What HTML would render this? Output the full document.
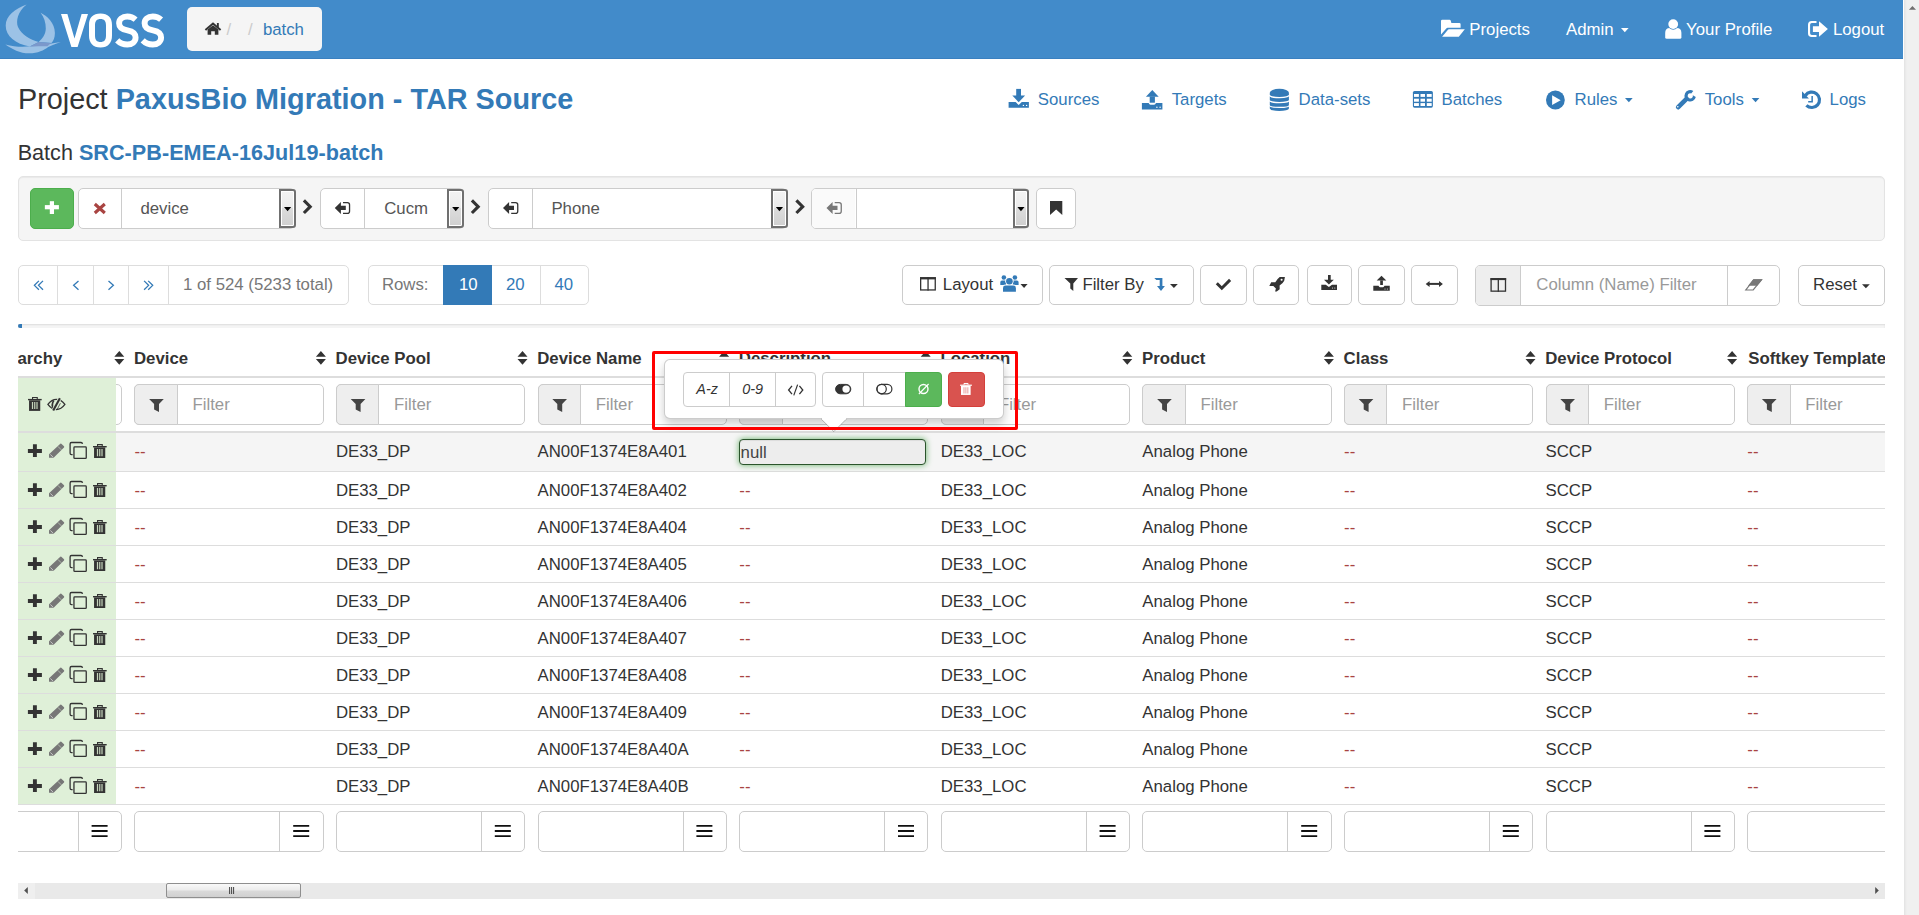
<!DOCTYPE html><html><head><meta charset="utf-8"><style>
html,body{margin:0;padding:0;width:1919px;height:915px;overflow:hidden;background:#fff;font-family:'Liberation Sans', sans-serif;}
</style></head><body>
<div style="position:absolute;left:0.00px;top:0.00px;width:1903.00px;height:59.00px;box-sizing:border-box;background:#428bca;border-bottom:1px solid #3a80c0;"></div>
<div style="position:absolute;left:187.00px;top:7.00px;width:135.00px;height:44.00px;box-sizing:border-box;background:#f5f5f5;border-radius:5px;"></div>
<div style="position:absolute;left:226.60px;top:20px;font-size:16.80px;line-height:19px;color:#ccc;white-space:nowrap;">/</div>
<div style="position:absolute;left:248.00px;top:20px;font-size:16.80px;line-height:19px;color:#ccc;white-space:nowrap;">/</div>
<div style="position:absolute;left:262.90px;top:20px;font-size:16.80px;line-height:19px;color:#337ab7;white-space:nowrap;">batch</div>
<div style="position:absolute;left:1469.30px;top:20px;font-size:16.80px;line-height:19px;color:#fff;white-space:nowrap;">Projects</div>
<div style="position:absolute;left:1566.00px;top:20px;font-size:16.80px;line-height:19px;color:#fff;white-space:nowrap;">Admin</div>
<div style="position:absolute;left:1686.10px;top:20px;font-size:16.80px;line-height:19px;color:#fff;white-space:nowrap;">Your Profile</div>
<div style="position:absolute;left:1832.90px;top:20px;font-size:16.80px;line-height:19px;color:#fff;white-space:nowrap;">Logout</div>
<div style="position:absolute;left:18.00px;top:83px;font-size:28.80px;line-height:32px;color:#333;white-space:nowrap;">Project <span style="color:#337ab7;font-weight:700;letter-spacing:0.02px">PaxusBio Migration - TAR Source</span></div>
<div style="position:absolute;left:1037.80px;top:90px;font-size:16.80px;line-height:19px;color:#337ab7;white-space:nowrap;">Sources</div>
<div style="position:absolute;left:1171.70px;top:90px;font-size:16.80px;line-height:19px;color:#337ab7;white-space:nowrap;">Targets</div>
<div style="position:absolute;left:1298.60px;top:90px;font-size:16.80px;line-height:19px;color:#337ab7;white-space:nowrap;">Data-sets</div>
<div style="position:absolute;left:1441.60px;top:90px;font-size:16.80px;line-height:19px;color:#337ab7;white-space:nowrap;">Batches</div>
<div style="position:absolute;left:1574.60px;top:90px;font-size:16.80px;line-height:19px;color:#337ab7;white-space:nowrap;">Rules</div>
<div style="position:absolute;left:1704.70px;top:90px;font-size:16.80px;line-height:19px;color:#337ab7;white-space:nowrap;">Tools</div>
<div style="position:absolute;left:1829.60px;top:90px;font-size:16.80px;line-height:19px;color:#337ab7;white-space:nowrap;">Logs</div>
<div style="position:absolute;left:17.70px;top:140px;font-size:21.60px;line-height:25px;color:#333;white-space:nowrap;">Batch <span style="color:#337ab7;font-weight:700;letter-spacing:0.04px">SRC-PB-EMEA-16Jul19-batch</span></div>
<div style="position:absolute;left:18.00px;top:176.00px;width:1867.00px;height:64.50px;box-sizing:border-box;background:#f5f5f5;border:1px solid #e3e3e3;border-radius:5px;box-shadow:inset 0 1px 1px rgba(0,0,0,.05);"></div>
<div style="position:absolute;left:30.00px;top:188.00px;width:44.00px;height:41.00px;box-sizing:border-box;background:#5cb85c;border:1px solid #4cae4c;border-radius:5px;"></div>
<div style="position:absolute;left:78.30px;top:188.00px;width:217.20px;height:41.00px;box-sizing:border-box;background:#fff;border:1px solid #ccc;border-radius:5px;"></div>
<div style="position:absolute;left:121.00px;top:188.00px;width:1.00px;height:41.00px;box-sizing:border-box;background:#ccc;"></div>
<div style="position:absolute;left:279.20px;top:189.00px;width:16.80px;height:38.80px;box-sizing:border-box;border:2px solid #707070;border-radius:0 3px 3px 0;background:linear-gradient(#f3f3f3 0%,#ebebeb 48%,#dcdcdc 50%,#d0d0d0 100%);box-shadow:inset 0 0 0 1px #fff;"></div>
<div style="position:absolute;left:140.40px;top:199px;font-size:16.80px;line-height:19px;color:#555;white-space:nowrap;">device</div>
<div style="position:absolute;left:319.50px;top:188.00px;width:144.30px;height:41.00px;box-sizing:border-box;background:#fff;border:1px solid #ccc;border-radius:5px;"></div>
<div style="position:absolute;left:364.10px;top:188.00px;width:1.00px;height:41.00px;box-sizing:border-box;background:#ccc;"></div>
<div style="position:absolute;left:447.20px;top:189.00px;width:17.10px;height:38.80px;box-sizing:border-box;border:2px solid #707070;border-radius:0 3px 3px 0;background:linear-gradient(#f3f3f3 0%,#ebebeb 48%,#dcdcdc 50%,#d0d0d0 100%);box-shadow:inset 0 0 0 1px #fff;"></div>
<div style="position:absolute;left:384.20px;top:199px;font-size:16.80px;line-height:19px;color:#555;white-space:nowrap;">Cucm</div>
<div style="position:absolute;left:487.50px;top:188.00px;width:299.90px;height:41.00px;box-sizing:border-box;background:#fff;border:1px solid #ccc;border-radius:5px;"></div>
<div style="position:absolute;left:531.70px;top:188.00px;width:1.00px;height:41.00px;box-sizing:border-box;background:#ccc;"></div>
<div style="position:absolute;left:771.00px;top:189.00px;width:16.90px;height:38.80px;box-sizing:border-box;border:2px solid #707070;border-radius:0 3px 3px 0;background:linear-gradient(#f3f3f3 0%,#ebebeb 48%,#dcdcdc 50%,#d0d0d0 100%);box-shadow:inset 0 0 0 1px #fff;"></div>
<div style="position:absolute;left:551.40px;top:199px;font-size:16.80px;line-height:19px;color:#555;white-space:nowrap;">Phone</div>
<div style="position:absolute;left:811.40px;top:188.00px;width:217.40px;height:41.00px;box-sizing:border-box;background:#fff;border:1px solid #ccc;border-radius:5px;"></div>
<div style="position:absolute;left:855.50px;top:188.00px;width:1.00px;height:41.00px;box-sizing:border-box;background:#ccc;"></div>
<div style="position:absolute;left:812.40px;top:189.00px;width:43.10px;height:39.00px;box-sizing:border-box;background:#fafafa;border-radius:4px 0 0 4px;"></div>
<div style="position:absolute;left:1012.60px;top:189.00px;width:16.70px;height:38.80px;box-sizing:border-box;border:2px solid #707070;border-radius:0 3px 3px 0;background:linear-gradient(#f3f3f3 0%,#ebebeb 48%,#dcdcdc 50%,#d0d0d0 100%);box-shadow:inset 0 0 0 1px #fff;"></div>
<div style="position:absolute;left:1035.50px;top:188.00px;width:40.80px;height:41.00px;box-sizing:border-box;background:#fff;border:1px solid #ccc;border-radius:5px;"></div>
<div style="position:absolute;left:18.20px;top:265.00px;width:330.50px;height:40.00px;box-sizing:border-box;background:#fff;border:1px solid #ddd;border-radius:5px;"></div>
<div style="position:absolute;left:56.90px;top:265.00px;width:1.00px;height:40.00px;box-sizing:border-box;background:#ddd;"></div>
<div style="position:absolute;left:93.00px;top:265.00px;width:1.00px;height:40.00px;box-sizing:border-box;background:#ddd;"></div>
<div style="position:absolute;left:128.00px;top:265.00px;width:1.00px;height:40.00px;box-sizing:border-box;background:#ddd;"></div>
<div style="position:absolute;left:168.20px;top:265.00px;width:1.00px;height:40.00px;box-sizing:border-box;background:#ddd;"></div>
<div style="position:absolute;left:183.00px;top:275px;font-size:16.80px;line-height:19px;color:#777;white-space:nowrap;">1 of 524 (5233 total)</div>
<div style="position:absolute;left:367.50px;top:265.00px;width:221.00px;height:40.00px;box-sizing:border-box;background:#fff;border:1px solid #ddd;border-radius:5px;"></div>
<div style="position:absolute;left:443.00px;top:265.00px;width:49.00px;height:40.00px;box-sizing:border-box;background:#337ab7;"></div>
<div style="position:absolute;left:539.90px;top:265.00px;width:1.00px;height:40.00px;box-sizing:border-box;background:#ddd;"></div>
<div style="position:absolute;left:381.90px;top:275px;font-size:16.80px;line-height:19px;color:#777;white-space:nowrap;">Rows:</div>
<div style="position:absolute;left:458.90px;top:275px;font-size:16.80px;line-height:19px;color:#fff;white-space:nowrap;">10</div>
<div style="position:absolute;left:505.90px;top:275px;font-size:16.80px;line-height:19px;color:#337ab7;white-space:nowrap;">20</div>
<div style="position:absolute;left:554.50px;top:275px;font-size:16.80px;line-height:19px;color:#337ab7;white-space:nowrap;">40</div>
<div style="position:absolute;left:902.00px;top:265.00px;width:140.60px;height:40.00px;box-sizing:border-box;background:#fff;border:1px solid #ccc;border-radius:5px;"></div>
<div style="position:absolute;left:942.80px;top:275px;font-size:16.80px;line-height:19px;color:#333;white-space:nowrap;">Layout</div>
<div style="position:absolute;left:1049.30px;top:265.00px;width:144.40px;height:40.00px;box-sizing:border-box;background:#fff;border:1px solid #ccc;border-radius:5px;"></div>
<div style="position:absolute;left:1082.40px;top:275px;font-size:16.80px;line-height:19px;color:#333;white-space:nowrap;">Filter By</div>
<div style="position:absolute;left:1200.40px;top:265.00px;width:46.20px;height:40.00px;box-sizing:border-box;background:#fff;border:1px solid #ccc;border-radius:5px;"></div>
<div style="position:absolute;left:1253.30px;top:265.00px;width:46.20px;height:40.00px;box-sizing:border-box;background:#fff;border:1px solid #ccc;border-radius:5px;"></div>
<div style="position:absolute;left:1306.50px;top:265.00px;width:45.00px;height:40.00px;box-sizing:border-box;background:#fff;border:1px solid #ccc;border-radius:5px;"></div>
<div style="position:absolute;left:1358.00px;top:265.00px;width:46.70px;height:40.00px;box-sizing:border-box;background:#fff;border:1px solid #ccc;border-radius:5px;"></div>
<div style="position:absolute;left:1411.40px;top:265.00px;width:46.20px;height:40.00px;box-sizing:border-box;background:#fff;border:1px solid #ccc;border-radius:5px;"></div>
<div style="position:absolute;left:1475.00px;top:265.00px;width:305.00px;height:40.50px;box-sizing:border-box;background:#fff;border:1px solid #ccc;border-radius:5px;"></div>
<div style="position:absolute;left:1476.00px;top:266.00px;width:45.00px;height:38.50px;box-sizing:border-box;background:#eee;border-radius:4px 0 0 4px;border-right:1px solid #ccc;"></div>
<div style="position:absolute;left:1727.00px;top:265.00px;width:1.00px;height:40.50px;box-sizing:border-box;background:#ccc;"></div>
<div style="position:absolute;left:1536.30px;top:275px;font-size:16.80px;line-height:19px;color:#999;white-space:nowrap;">Column (Name) Filter</div>
<div style="position:absolute;left:1798.00px;top:265.00px;width:86.60px;height:40.50px;box-sizing:border-box;background:#fff;border:1px solid #ccc;border-radius:5px;"></div>
<div style="position:absolute;left:1813.10px;top:275px;font-size:16.80px;line-height:19px;color:#333;white-space:nowrap;">Reset</div>
<div style="position:absolute;left:18.00px;top:324.00px;width:1867.00px;height:4.00px;box-sizing:border-box;background:#f5f5f5;box-shadow:inset 0 1px 2px rgba(0,0,0,.1);"></div>
<div style="position:absolute;left:18.00px;top:324.00px;width:4.00px;height:4.00px;box-sizing:border-box;background:#337ab7;border-radius:2px 0 0 2px;"></div>
<svg style="position:absolute;left:0;top:0" width="1919" height="915" viewBox="0 0 1919 915"><g fill="#9cc2e6"><path d="M26.6,4.4 C15,9 5.7,15.5 5.7,25.4 C5.7,36.5 15.5,43.5 29.8,46.6 L38.7,41.9 C30,39.5 21.5,35 18,27 C15.8,21 17.5,11.5 26.6,4.4 Z"/><path d="M40.6,12.7 C47,16 54.9,22.5 54.9,33 C54.9,37.5 53.5,41 51.4,43.1 L38.7,41.9 C42.5,38.5 45.6,34.5 45.8,28.5 C45.9,22.5 44,17 40.6,12.7 Z"/><path d="M5.4,44.4 C12,49 20,53.3 29.2,53.3 C38,53.3 44,50 48.2,46.9 C52,45 56,43.5 60.9,41.9 C52,43.2 45,44.6 38,45.5 C28,46.8 17,47.8 5.4,44.4 Z"/></g><path d="M29.8,46.4 L38.7,41.9 L51.2,43.1 L47.4,46.2 C41,46.3 35,46.3 29.8,46.4 Z" fill="#7b98cb"/><path d="M61,14 L67.4,14 L74.5,38.5 L81.6,14 L88,14 L77.6,47 L71.4,47 Z" fill="#fff"/><path d="M100.5,13.5 C93,13.5 89,17.5 89,25 L89,35.5 C89,43 93,47.5 100.5,47.5 C108,47.5 112,43 112,35.5 L112,25 C112,17.5 108,13.5 100.5,13.5 Z M100.5,19 C104.2,19 106,21 106,25.5 L106,35.5 C106,40 104.2,42 100.5,42 C96.8,42 95,40 95,35.5 L95,25.5 C95,21 96.8,19 100.5,19 Z" fill="#fff" fill-rule="evenodd"/><path d="M135.60,19.6 C133.00,17.3 130.30,16.5 127.30,16.5 C122.00,16.5 119.10,19.5 119.10,23.2 C119.10,27.5 122.50,29.5 127.50,30.4 C132.50,31.3 135.60,33.5 135.60,37.6 C135.60,41.8 132.00,44.5 127.30,44.5 C123.00,44.5 119.80,43 117.20,40.4" fill="none" stroke="#fff" stroke-width="5.9"/><path d="M161.10,19.6 C158.50,17.3 155.80,16.5 152.80,16.5 C147.50,16.5 144.60,19.5 144.60,23.2 C144.60,27.5 148.00,29.5 153.00,30.4 C158.00,31.3 161.10,33.5 161.10,37.6 C161.10,41.8 157.50,44.5 152.80,44.5 C148.50,44.5 145.30,43 142.70,40.4" fill="none" stroke="#fff" stroke-width="5.9"/><path d="M205.4,30 L213,23.6 L220.6,30" fill="none" stroke="#333" stroke-width="2"/><path d="M207.6,29.6 L213,25.2 L218.4,29.6 L218.4,34.8 L214.8,34.8 L214.8,31.2 L211.2,31.2 L211.2,34.8 L207.6,34.8 Z" fill="#333"/><rect x="216.9" y="23" width="1.9" height="4.4" fill="#333"/><path d="M1441,21 Q1441,19.7 1442.3,19.7 H1449.6 Q1450.4,19.7 1450.7,20.5 L1451.4,22.9 H1459.3 Q1460.6,22.9 1460.6,24.2 V27.8 H1447.6 Q1446.8,27.8 1446.3,28.4 L1441,34.4 Z" fill="#fff"/><path d="M1442.1,36.8 L1448.2,29.6 Q1448.6,29.2 1449.2,29.2 H1464.8 L1458.8,36.8 Z" fill="#fff"/><path d="M1621,28 H1628.6 L1624.8,32.2 Z" fill="#fff"/><path d="M1665.2,32.8 Q1665.2,28.1 1669.9,28.1 H1676.7 Q1681.4,28.1 1681.4,32.8 V37.3 Q1681.4,38.8 1679.9,38.8 H1666.7 Q1665.2,38.8 1665.2,37.3 Z" fill="#fff"/><circle cx="1673.2" cy="24.1" r="5.6" fill="#428bca"/><circle cx="1673.2" cy="24.1" r="4.9" fill="#fff"/><path d="M1816.5,22.05 H1811.8 Q1809.05,22.05 1809.05,24.8 V33.2 Q1809.05,35.95 1811.8,35.95 H1816.5" fill="none" stroke="#fff" stroke-width="2.1"/><path d="M1812.9,26.2 H1819 V21.3 L1827.9,29 L1819,36.8 V32 H1812.9 Z" fill="#fff"/><rect x="1016.2" y="88.9" width="4.8" height="7.2" fill="#337ab7"/><path d="M1012.3,95.6 H1025.1 L1018.7,102.2 Z" fill="#337ab7"/><path d="M1008.6,102 H1015.6 L1018.7,105 L1021.8,102 H1028.9 V107.7 H1008.6 Z" fill="#337ab7"/><circle cx="1023.4" cy="105.4" r="0.7" fill="#fff"/><circle cx="1026.6" cy="105.4" r="0.7" fill="#fff"/><path d="M1152.3,90 L1158.7,96.7 H1145.9 Z" fill="#337ab7"/><rect x="1149.7" y="96.5" width="5.2" height="6.2" fill="#337ab7"/><path d="M1141.9,103.1 H1148.6 Q1149.3,104.8 1150.5,104.8 H1154.1 Q1155.3,104.8 1156,103.1 H1162.4 V109.6 H1141.9 Z" fill="#337ab7"/><circle cx="1156.9" cy="107.3" r="0.7" fill="#fff"/><circle cx="1160.1" cy="107.3" r="0.7" fill="#fff"/><path d="M1269.8,92.8 A9.55,4 0 0 1 1288.9,92.8 V108.6 A9.55,2.5 0 0 1 1269.8,108.6 Z" fill="#337ab7"/><path d="M1269.3,95.1 A10,2.5 0 0 0 1289.4,95.1 M1269.3,100.2 A10,2.3 0 0 0 1289.4,100.2 M1269.3,105.2 A10,2.2 0 0 0 1289.4,105.2" fill="none" stroke="#fff" stroke-width="1.25"/><rect x="1412.9" y="90.9" width="20" height="16.8" rx="1.6" fill="#337ab7"/><rect x="1414.0" y="94.0" width="4.9" height="2.9" fill="#fff"/><rect x="1414.0" y="98.7" width="4.9" height="3.0" fill="#fff"/><rect x="1414.0" y="103.1" width="4.9" height="2.9" fill="#fff"/><rect x="1420.5" y="94.0" width="4.5" height="2.9" fill="#fff"/><rect x="1420.5" y="98.7" width="4.5" height="3.0" fill="#fff"/><rect x="1420.5" y="103.1" width="4.5" height="2.9" fill="#fff"/><rect x="1426.8" y="94.0" width="4.9" height="2.9" fill="#fff"/><rect x="1426.8" y="98.7" width="4.9" height="3.0" fill="#fff"/><rect x="1426.8" y="103.1" width="4.9" height="2.9" fill="#fff"/><circle cx="1555.4" cy="100" r="9.4" fill="#337ab7"/><path d="M1552.1,95.3 V105.1 L1560.7,100.2 Z" fill="#fff"/><path d="M1625,98 H1632.7 L1628.85,102.2 Z" fill="#337ab7"/><path d="M1678.2,107.2 L1686.5,98.9" stroke="#337ab7" stroke-width="4.6" stroke-linecap="round"/><path d="M1693.3,91 A5.7,5.7 0 1 0 1695.8,97 L1692.8,95.2 A2.6,2.6 0 1 1 1691.2,93.4 Z" fill="#337ab7"/><circle cx="1677.8" cy="106.8" r="0.8" fill="#fff"/><path d="M1751.7,98 H1759.4 L1755.55,102.2 Z" fill="#337ab7"/><path d="M1805.4,95.5 A7.7,7.7 0 1 1 1806.4,105.3" fill="none" stroke="#337ab7" stroke-width="3.2"/><path d="M1802,91.2 V98.4 H1808.9 Z" fill="#337ab7"/><path d="M1812.15,96.1 V101.8 H1808.2" fill="none" stroke="#337ab7" stroke-width="1.5"/><rect x="49.8" y="201.2" width="4.2" height="12.8" fill="#fff"/><rect x="44.85" y="205.1" width="14.05" height="4.2" fill="#fff"/><path d="M284.00,206.9 H291.20 L287.60,211.2 Z" fill="#000"/><path d="M94.8,204 L104.8,213 M104.8,204 L94.8,213" stroke="#a94442" stroke-width="3.1"/><path d="M303.90,200.4 L310.20,206.7 L303.90,213" fill="none" stroke="#333" stroke-width="3.1" stroke-linecap="butt" stroke-linejoin="miter"/><path d="M452.15,206.9 H459.35 L455.75,211.2 Z" fill="#000"/><path d="M334.80,207.9 L340.90,202 V205.7 H345.80 V210.1 H340.90 V214 Z" fill="#333"/><path d="M343.00,202.65 H347.40 Q349.55,202.65 349.55,204.8 V211.2 Q349.55,213.35 347.40,213.35 H343.00" fill="none" stroke="#333" stroke-width="1.3"/><path d="M471.90,200.4 L478.20,206.7 L471.90,213" fill="none" stroke="#333" stroke-width="3.1" stroke-linecap="butt" stroke-linejoin="miter"/><path d="M775.85,206.9 H783.05 L779.45,211.2 Z" fill="#000"/><path d="M503.00,207.9 L509.10,202 V205.7 H514.00 V210.1 H509.10 V214 Z" fill="#333"/><path d="M511.20,202.65 H515.60 Q517.75,202.65 517.75,204.8 V211.2 Q517.75,213.35 515.60,213.35 H511.20" fill="none" stroke="#333" stroke-width="1.3"/><path d="M796.40,200.4 L802.70,206.7 L796.40,213" fill="none" stroke="#333" stroke-width="3.1" stroke-linecap="butt" stroke-linejoin="miter"/><path d="M1017.35,206.9 H1024.55 L1020.95,211.2 Z" fill="#000"/><path d="M826.50,207.9 L832.60,202 V205.7 H837.50 V210.1 H832.60 V214 Z" fill="#777"/><path d="M834.70,202.65 H839.10 Q841.25,202.65 841.25,204.8 V211.2 Q841.25,213.35 839.10,213.35 H834.70" fill="none" stroke="#777" stroke-width="1.3"/><path d="M1050,201 H1062.3 V215 L1056.15,209.6 L1050,215 Z" fill="#333"/><path d="M38.9,280.9 L34.4,285.35 L38.9,289.8 M43,280.9 L38.5,285.35 L43,289.8" fill="none" stroke="#337ab7" stroke-width="1.3"/><path d="M78.5,280.9 L73.6,285.35 L78.5,289.8" fill="none" stroke="#337ab7" stroke-width="1.3"/><path d="M108.5,280.9 L113.4,285.35 L108.5,289.8" fill="none" stroke="#337ab7" stroke-width="1.3"/><path d="M144.1,280.9 L148.6,285.35 L144.1,289.8 M148.2,280.9 L152.7,285.35 L148.2,289.8" fill="none" stroke="#337ab7" stroke-width="1.3"/><rect x="920.65" y="277.85" width="14.6" height="12.1" fill="none" stroke="#333" stroke-width="1.3"/><rect x="920" y="277.2" width="15.9" height="2.2" fill="#333"/><rect x="927.4" y="277.2" width="1.3" height="13.4" fill="#333"/><circle cx="1003.9" cy="277.5" r="2.3" fill="#337ab7"/><circle cx="1014.9" cy="277.5" r="2.3" fill="#337ab7"/><path d="M1000.3,284.9 V282.3 Q1000.3,280.6 1002,280.6 H1006 V284.9 Z M1012.8,280.6 H1016.9 Q1018.6,280.6 1018.6,282.3 V284.9 H1012.8 Z" fill="#337ab7"/><circle cx="1009.4" cy="281.3" r="4.2" fill="#fff"/><path d="M1003,291.8 V287.8 Q1003,285.3 1005.5,285.3 H1013.4 Q1015.9,285.3 1015.9,287.8 V291.8 Z" fill="none" stroke="#fff" stroke-width="1.6"/><circle cx="1009.4" cy="281.2" r="3.3" fill="#337ab7"/><path d="M1003,291.8 V288 Q1003,285.6 1005.5,285.6 H1013.4 Q1015.9,285.6 1015.9,288 V291.8 Z" fill="#337ab7"/><path d="M1020.5,284 H1027.6 L1024.05,288.1 Z" fill="#333"/><path d="M1064.5,278.1 H1078 L1073.3,283.5 V291 L1070.3,288.5 V283.5 Z" fill="#333"/><path d="M1154.3,278 H1162.4 V286.1 H1164.9 L1161,291 L1157,286.1 H1159.7 V280 H1156.3 Z" fill="#337ab7"/><path d="M1170,284 H1177.8 L1173.9,288 Z" fill="#333"/><path d="M1216.8,283.3 L1221.8,288.2 L1230.1,279.9" fill="none" stroke="#333" stroke-width="3"/><path d="M1279.7,277.1 H1284.9 L1284.2,280.7 Q1283,283.3 1279.6,285.6 L1279.7,289.3 L1276.7,291.5 H1275.1 L1275.9,288.4 L1273.3,286 H1269.3 L1271.2,282.2 H1275.3 Q1277.3,279 1279.7,277.1 Z" fill="#333"/><circle cx="1281.6" cy="279.7" r="1.05" fill="#fff"/><rect x="1328" y="275" width="2.7" height="5" fill="#333"/><path d="M1324,279.7 H1333.8 L1328.9,284.6 Z" fill="#333"/><path d="M1321.3,284.8 H1325.8 L1328.9,287 L1332,284.8 H1337 V289.9 H1321.3 Z" fill="#333"/><circle cx="1332.5" cy="288" r="0.5" fill="#fff"/><circle cx="1334.8" cy="288" r="0.5" fill="#fff"/><path d="M1381.5,275.8 L1386.3,280.6 H1376.7 Z" fill="#333"/><rect x="1380.2" y="280.4" width="2.7" height="4.6" fill="#333"/><path d="M1373.3,285.8 H1378.5 Q1379,287.2 1380,287.2 H1383 Q1384,287.2 1384.5,285.8 H1389.75 V290.7 H1373.3 Z" fill="#333"/><circle cx="1385" cy="289" r="0.5" fill="#fff"/><circle cx="1387.3" cy="289" r="0.5" fill="#fff"/><path d="M1428,283.9 H1440.6" stroke="#333" stroke-width="2"/><path d="M1425.7,283.9 L1429.6,280.9 V286.9 Z M1442.9,283.9 L1439,280.9 V286.9 Z" fill="#333"/><rect x="1491.1" y="278.75" width="14.4" height="12.4" fill="none" stroke="#333" stroke-width="1.3"/><rect x="1490.45" y="278.1" width="15.7" height="2" fill="#333"/><rect x="1497.65" y="278.1" width="1.3" height="13.7" fill="#333"/><path d="M1753.7,279.8 H1761.4 L1753.2,290 H1745.8 Z" fill="none" stroke="#777" stroke-width="1.2"/><path d="M1753.3,279.2 H1762.6 L1757.3,285.8 H1748.1 Z" fill="#777"/><path d="M1862,284.2 H1869.8 L1865.9,288.2 Z" fill="#333"/></svg>
<div style="position:absolute;left:18px;top:330px;width:1867px;height:540px;overflow:hidden;">
<div style="position:absolute;left:-18px;top:-330px;width:1919px;height:915px;">
<div style="position:absolute;left:17.50px;top:349px;font-size:16.80px;line-height:19px;color:#333;white-space:nowrap;font-weight:700;">archy</div>
<div style="position:absolute;left:134.00px;top:349px;font-size:16.80px;line-height:19px;color:#333;white-space:nowrap;font-weight:700;">Device</div>
<div style="position:absolute;left:335.60px;top:349px;font-size:16.80px;line-height:19px;color:#333;white-space:nowrap;font-weight:700;">Device Pool</div>
<div style="position:absolute;left:537.20px;top:349px;font-size:16.80px;line-height:19px;color:#333;white-space:nowrap;font-weight:700;">Device Name</div>
<div style="position:absolute;left:738.80px;top:349px;font-size:16.80px;line-height:19px;color:#333;white-space:nowrap;font-weight:700;">Description</div>
<div style="position:absolute;left:940.40px;top:349px;font-size:16.80px;line-height:19px;color:#333;white-space:nowrap;font-weight:700;">Location</div>
<div style="position:absolute;left:1142.00px;top:349px;font-size:16.80px;line-height:19px;color:#333;white-space:nowrap;font-weight:700;">Product</div>
<div style="position:absolute;left:1343.60px;top:349px;font-size:16.80px;line-height:19px;color:#333;white-space:nowrap;font-weight:700;">Class</div>
<div style="position:absolute;left:1545.20px;top:349px;font-size:16.80px;line-height:19px;color:#333;white-space:nowrap;font-weight:700;">Device Protocol</div>
<div style="position:absolute;left:1748.30px;top:349px;font-size:16.80px;line-height:19px;color:#333;white-space:nowrap;font-weight:700;">Softkey Template</div>
<div style="position:absolute;left:0.00px;top:376.00px;width:1919.00px;height:2.00px;box-sizing:border-box;background:#ddd;"></div>
<div style="position:absolute;left:-67.30px;top:384.00px;width:189.30px;height:41.00px;box-sizing:border-box;background:#fff;border:1px solid #ccc;border-radius:5px;"></div>
<div style="position:absolute;left:-67.30px;top:384.00px;width:43.60px;height:41.00px;box-sizing:border-box;background:#eee;border:1px solid #ccc;border-radius:5px 0 0 5px;"></div>
<div style="position:absolute;left:-9.10px;top:395px;font-size:16.80px;line-height:19px;color:#999;white-space:nowrap;">Filter</div>
<div style="position:absolute;left:134.30px;top:384.00px;width:189.30px;height:41.00px;box-sizing:border-box;background:#fff;border:1px solid #ccc;border-radius:5px;"></div>
<div style="position:absolute;left:134.30px;top:384.00px;width:43.60px;height:41.00px;box-sizing:border-box;background:#eee;border:1px solid #ccc;border-radius:5px 0 0 5px;"></div>
<div style="position:absolute;left:192.50px;top:395px;font-size:16.80px;line-height:19px;color:#999;white-space:nowrap;">Filter</div>
<div style="position:absolute;left:335.90px;top:384.00px;width:189.30px;height:41.00px;box-sizing:border-box;background:#fff;border:1px solid #ccc;border-radius:5px;"></div>
<div style="position:absolute;left:335.90px;top:384.00px;width:43.60px;height:41.00px;box-sizing:border-box;background:#eee;border:1px solid #ccc;border-radius:5px 0 0 5px;"></div>
<div style="position:absolute;left:394.10px;top:395px;font-size:16.80px;line-height:19px;color:#999;white-space:nowrap;">Filter</div>
<div style="position:absolute;left:537.50px;top:384.00px;width:189.30px;height:41.00px;box-sizing:border-box;background:#fff;border:1px solid #ccc;border-radius:5px;"></div>
<div style="position:absolute;left:537.50px;top:384.00px;width:43.60px;height:41.00px;box-sizing:border-box;background:#eee;border:1px solid #ccc;border-radius:5px 0 0 5px;"></div>
<div style="position:absolute;left:595.70px;top:395px;font-size:16.80px;line-height:19px;color:#999;white-space:nowrap;">Filter</div>
<div style="position:absolute;left:739.10px;top:384.00px;width:189.30px;height:41.00px;box-sizing:border-box;background:#fff;border:1px solid #ccc;border-radius:5px;"></div>
<div style="position:absolute;left:739.10px;top:384.00px;width:43.60px;height:41.00px;box-sizing:border-box;background:#eee;border:1px solid #ccc;border-radius:5px 0 0 5px;"></div>
<div style="position:absolute;left:797.30px;top:395px;font-size:16.80px;line-height:19px;color:#999;white-space:nowrap;">Filter</div>
<div style="position:absolute;left:940.70px;top:384.00px;width:189.30px;height:41.00px;box-sizing:border-box;background:#fff;border:1px solid #ccc;border-radius:5px;"></div>
<div style="position:absolute;left:940.70px;top:384.00px;width:43.60px;height:41.00px;box-sizing:border-box;background:#eee;border:1px solid #ccc;border-radius:5px 0 0 5px;"></div>
<div style="position:absolute;left:998.90px;top:395px;font-size:16.80px;line-height:19px;color:#999;white-space:nowrap;">Filter</div>
<div style="position:absolute;left:1142.30px;top:384.00px;width:189.30px;height:41.00px;box-sizing:border-box;background:#fff;border:1px solid #ccc;border-radius:5px;"></div>
<div style="position:absolute;left:1142.30px;top:384.00px;width:43.60px;height:41.00px;box-sizing:border-box;background:#eee;border:1px solid #ccc;border-radius:5px 0 0 5px;"></div>
<div style="position:absolute;left:1200.50px;top:395px;font-size:16.80px;line-height:19px;color:#999;white-space:nowrap;">Filter</div>
<div style="position:absolute;left:1343.90px;top:384.00px;width:189.30px;height:41.00px;box-sizing:border-box;background:#fff;border:1px solid #ccc;border-radius:5px;"></div>
<div style="position:absolute;left:1343.90px;top:384.00px;width:43.60px;height:41.00px;box-sizing:border-box;background:#eee;border:1px solid #ccc;border-radius:5px 0 0 5px;"></div>
<div style="position:absolute;left:1402.10px;top:395px;font-size:16.80px;line-height:19px;color:#999;white-space:nowrap;">Filter</div>
<div style="position:absolute;left:1545.50px;top:384.00px;width:189.30px;height:41.00px;box-sizing:border-box;background:#fff;border:1px solid #ccc;border-radius:5px;"></div>
<div style="position:absolute;left:1545.50px;top:384.00px;width:43.60px;height:41.00px;box-sizing:border-box;background:#eee;border:1px solid #ccc;border-radius:5px 0 0 5px;"></div>
<div style="position:absolute;left:1603.70px;top:395px;font-size:16.80px;line-height:19px;color:#999;white-space:nowrap;">Filter</div>
<div style="position:absolute;left:1747.10px;top:384.00px;width:189.30px;height:41.00px;box-sizing:border-box;background:#fff;border:1px solid #ccc;border-radius:5px;"></div>
<div style="position:absolute;left:1747.10px;top:384.00px;width:43.60px;height:41.00px;box-sizing:border-box;background:#eee;border:1px solid #ccc;border-radius:5px 0 0 5px;"></div>
<div style="position:absolute;left:1805.30px;top:395px;font-size:16.80px;line-height:19px;color:#999;white-space:nowrap;">Filter</div>
<div style="position:absolute;left:0.00px;top:431.00px;width:1919.00px;height:2.00px;box-sizing:border-box;background:#ddd;"></div>
<div style="position:absolute;left:0.00px;top:433.00px;width:1919.00px;height:38.00px;box-sizing:border-box;background:#f5f5f5;"></div>
<div style="position:absolute;left:0.00px;top:471.00px;width:1919.00px;height:1.00px;box-sizing:border-box;background:#ddd;"></div>
<div style="position:absolute;left:0.00px;top:508.00px;width:1919.00px;height:1.00px;box-sizing:border-box;background:#ddd;"></div>
<div style="position:absolute;left:0.00px;top:545.00px;width:1919.00px;height:1.00px;box-sizing:border-box;background:#ddd;"></div>
<div style="position:absolute;left:0.00px;top:582.00px;width:1919.00px;height:1.00px;box-sizing:border-box;background:#ddd;"></div>
<div style="position:absolute;left:0.00px;top:619.00px;width:1919.00px;height:1.00px;box-sizing:border-box;background:#ddd;"></div>
<div style="position:absolute;left:0.00px;top:656.00px;width:1919.00px;height:1.00px;box-sizing:border-box;background:#ddd;"></div>
<div style="position:absolute;left:0.00px;top:693.00px;width:1919.00px;height:1.00px;box-sizing:border-box;background:#ddd;"></div>
<div style="position:absolute;left:0.00px;top:730.00px;width:1919.00px;height:1.00px;box-sizing:border-box;background:#ddd;"></div>
<div style="position:absolute;left:0.00px;top:767.00px;width:1919.00px;height:1.00px;box-sizing:border-box;background:#ddd;"></div>
<div style="position:absolute;left:0.00px;top:804.00px;width:1919.00px;height:1.00px;box-sizing:border-box;background:#ddd;"></div>
<div style="position:absolute;left:134.50px;top:442px;font-size:16.80px;line-height:19px;color:#a94442;white-space:nowrap;">--</div>
<div style="position:absolute;left:335.90px;top:442px;font-size:16.80px;line-height:19px;color:#333;white-space:nowrap;">DE33_DP</div>
<div style="position:absolute;left:537.50px;top:442px;font-size:16.80px;line-height:19px;color:#333;white-space:nowrap;">AN00F1374E8A401</div>
<div style="position:absolute;left:940.70px;top:442px;font-size:16.80px;line-height:19px;color:#333;white-space:nowrap;">DE33_LOC</div>
<div style="position:absolute;left:1142.30px;top:442px;font-size:16.80px;line-height:19px;color:#333;white-space:nowrap;">Analog Phone</div>
<div style="position:absolute;left:1344.10px;top:442px;font-size:16.80px;line-height:19px;color:#a94442;white-space:nowrap;">--</div>
<div style="position:absolute;left:1545.50px;top:442px;font-size:16.80px;line-height:19px;color:#333;white-space:nowrap;">SCCP</div>
<div style="position:absolute;left:1747.30px;top:442px;font-size:16.80px;line-height:19px;color:#a94442;white-space:nowrap;">--</div>
<div style="position:absolute;left:134.50px;top:481px;font-size:16.80px;line-height:19px;color:#a94442;white-space:nowrap;">--</div>
<div style="position:absolute;left:335.90px;top:481px;font-size:16.80px;line-height:19px;color:#333;white-space:nowrap;">DE33_DP</div>
<div style="position:absolute;left:537.50px;top:481px;font-size:16.80px;line-height:19px;color:#333;white-space:nowrap;">AN00F1374E8A402</div>
<div style="position:absolute;left:739.30px;top:481px;font-size:16.80px;line-height:19px;color:#a94442;white-space:nowrap;">--</div>
<div style="position:absolute;left:940.70px;top:481px;font-size:16.80px;line-height:19px;color:#333;white-space:nowrap;">DE33_LOC</div>
<div style="position:absolute;left:1142.30px;top:481px;font-size:16.80px;line-height:19px;color:#333;white-space:nowrap;">Analog Phone</div>
<div style="position:absolute;left:1344.10px;top:481px;font-size:16.80px;line-height:19px;color:#a94442;white-space:nowrap;">--</div>
<div style="position:absolute;left:1545.50px;top:481px;font-size:16.80px;line-height:19px;color:#333;white-space:nowrap;">SCCP</div>
<div style="position:absolute;left:1747.30px;top:481px;font-size:16.80px;line-height:19px;color:#a94442;white-space:nowrap;">--</div>
<div style="position:absolute;left:134.50px;top:518px;font-size:16.80px;line-height:19px;color:#a94442;white-space:nowrap;">--</div>
<div style="position:absolute;left:335.90px;top:518px;font-size:16.80px;line-height:19px;color:#333;white-space:nowrap;">DE33_DP</div>
<div style="position:absolute;left:537.50px;top:518px;font-size:16.80px;line-height:19px;color:#333;white-space:nowrap;">AN00F1374E8A404</div>
<div style="position:absolute;left:739.30px;top:518px;font-size:16.80px;line-height:19px;color:#a94442;white-space:nowrap;">--</div>
<div style="position:absolute;left:940.70px;top:518px;font-size:16.80px;line-height:19px;color:#333;white-space:nowrap;">DE33_LOC</div>
<div style="position:absolute;left:1142.30px;top:518px;font-size:16.80px;line-height:19px;color:#333;white-space:nowrap;">Analog Phone</div>
<div style="position:absolute;left:1344.10px;top:518px;font-size:16.80px;line-height:19px;color:#a94442;white-space:nowrap;">--</div>
<div style="position:absolute;left:1545.50px;top:518px;font-size:16.80px;line-height:19px;color:#333;white-space:nowrap;">SCCP</div>
<div style="position:absolute;left:1747.30px;top:518px;font-size:16.80px;line-height:19px;color:#a94442;white-space:nowrap;">--</div>
<div style="position:absolute;left:134.50px;top:555px;font-size:16.80px;line-height:19px;color:#a94442;white-space:nowrap;">--</div>
<div style="position:absolute;left:335.90px;top:555px;font-size:16.80px;line-height:19px;color:#333;white-space:nowrap;">DE33_DP</div>
<div style="position:absolute;left:537.50px;top:555px;font-size:16.80px;line-height:19px;color:#333;white-space:nowrap;">AN00F1374E8A405</div>
<div style="position:absolute;left:739.30px;top:555px;font-size:16.80px;line-height:19px;color:#a94442;white-space:nowrap;">--</div>
<div style="position:absolute;left:940.70px;top:555px;font-size:16.80px;line-height:19px;color:#333;white-space:nowrap;">DE33_LOC</div>
<div style="position:absolute;left:1142.30px;top:555px;font-size:16.80px;line-height:19px;color:#333;white-space:nowrap;">Analog Phone</div>
<div style="position:absolute;left:1344.10px;top:555px;font-size:16.80px;line-height:19px;color:#a94442;white-space:nowrap;">--</div>
<div style="position:absolute;left:1545.50px;top:555px;font-size:16.80px;line-height:19px;color:#333;white-space:nowrap;">SCCP</div>
<div style="position:absolute;left:1747.30px;top:555px;font-size:16.80px;line-height:19px;color:#a94442;white-space:nowrap;">--</div>
<div style="position:absolute;left:134.50px;top:592px;font-size:16.80px;line-height:19px;color:#a94442;white-space:nowrap;">--</div>
<div style="position:absolute;left:335.90px;top:592px;font-size:16.80px;line-height:19px;color:#333;white-space:nowrap;">DE33_DP</div>
<div style="position:absolute;left:537.50px;top:592px;font-size:16.80px;line-height:19px;color:#333;white-space:nowrap;">AN00F1374E8A406</div>
<div style="position:absolute;left:739.30px;top:592px;font-size:16.80px;line-height:19px;color:#a94442;white-space:nowrap;">--</div>
<div style="position:absolute;left:940.70px;top:592px;font-size:16.80px;line-height:19px;color:#333;white-space:nowrap;">DE33_LOC</div>
<div style="position:absolute;left:1142.30px;top:592px;font-size:16.80px;line-height:19px;color:#333;white-space:nowrap;">Analog Phone</div>
<div style="position:absolute;left:1344.10px;top:592px;font-size:16.80px;line-height:19px;color:#a94442;white-space:nowrap;">--</div>
<div style="position:absolute;left:1545.50px;top:592px;font-size:16.80px;line-height:19px;color:#333;white-space:nowrap;">SCCP</div>
<div style="position:absolute;left:1747.30px;top:592px;font-size:16.80px;line-height:19px;color:#a94442;white-space:nowrap;">--</div>
<div style="position:absolute;left:134.50px;top:629px;font-size:16.80px;line-height:19px;color:#a94442;white-space:nowrap;">--</div>
<div style="position:absolute;left:335.90px;top:629px;font-size:16.80px;line-height:19px;color:#333;white-space:nowrap;">DE33_DP</div>
<div style="position:absolute;left:537.50px;top:629px;font-size:16.80px;line-height:19px;color:#333;white-space:nowrap;">AN00F1374E8A407</div>
<div style="position:absolute;left:739.30px;top:629px;font-size:16.80px;line-height:19px;color:#a94442;white-space:nowrap;">--</div>
<div style="position:absolute;left:940.70px;top:629px;font-size:16.80px;line-height:19px;color:#333;white-space:nowrap;">DE33_LOC</div>
<div style="position:absolute;left:1142.30px;top:629px;font-size:16.80px;line-height:19px;color:#333;white-space:nowrap;">Analog Phone</div>
<div style="position:absolute;left:1344.10px;top:629px;font-size:16.80px;line-height:19px;color:#a94442;white-space:nowrap;">--</div>
<div style="position:absolute;left:1545.50px;top:629px;font-size:16.80px;line-height:19px;color:#333;white-space:nowrap;">SCCP</div>
<div style="position:absolute;left:1747.30px;top:629px;font-size:16.80px;line-height:19px;color:#a94442;white-space:nowrap;">--</div>
<div style="position:absolute;left:134.50px;top:666px;font-size:16.80px;line-height:19px;color:#a94442;white-space:nowrap;">--</div>
<div style="position:absolute;left:335.90px;top:666px;font-size:16.80px;line-height:19px;color:#333;white-space:nowrap;">DE33_DP</div>
<div style="position:absolute;left:537.50px;top:666px;font-size:16.80px;line-height:19px;color:#333;white-space:nowrap;">AN00F1374E8A408</div>
<div style="position:absolute;left:739.30px;top:666px;font-size:16.80px;line-height:19px;color:#a94442;white-space:nowrap;">--</div>
<div style="position:absolute;left:940.70px;top:666px;font-size:16.80px;line-height:19px;color:#333;white-space:nowrap;">DE33_LOC</div>
<div style="position:absolute;left:1142.30px;top:666px;font-size:16.80px;line-height:19px;color:#333;white-space:nowrap;">Analog Phone</div>
<div style="position:absolute;left:1344.10px;top:666px;font-size:16.80px;line-height:19px;color:#a94442;white-space:nowrap;">--</div>
<div style="position:absolute;left:1545.50px;top:666px;font-size:16.80px;line-height:19px;color:#333;white-space:nowrap;">SCCP</div>
<div style="position:absolute;left:1747.30px;top:666px;font-size:16.80px;line-height:19px;color:#a94442;white-space:nowrap;">--</div>
<div style="position:absolute;left:134.50px;top:703px;font-size:16.80px;line-height:19px;color:#a94442;white-space:nowrap;">--</div>
<div style="position:absolute;left:335.90px;top:703px;font-size:16.80px;line-height:19px;color:#333;white-space:nowrap;">DE33_DP</div>
<div style="position:absolute;left:537.50px;top:703px;font-size:16.80px;line-height:19px;color:#333;white-space:nowrap;">AN00F1374E8A409</div>
<div style="position:absolute;left:739.30px;top:703px;font-size:16.80px;line-height:19px;color:#a94442;white-space:nowrap;">--</div>
<div style="position:absolute;left:940.70px;top:703px;font-size:16.80px;line-height:19px;color:#333;white-space:nowrap;">DE33_LOC</div>
<div style="position:absolute;left:1142.30px;top:703px;font-size:16.80px;line-height:19px;color:#333;white-space:nowrap;">Analog Phone</div>
<div style="position:absolute;left:1344.10px;top:703px;font-size:16.80px;line-height:19px;color:#a94442;white-space:nowrap;">--</div>
<div style="position:absolute;left:1545.50px;top:703px;font-size:16.80px;line-height:19px;color:#333;white-space:nowrap;">SCCP</div>
<div style="position:absolute;left:1747.30px;top:703px;font-size:16.80px;line-height:19px;color:#a94442;white-space:nowrap;">--</div>
<div style="position:absolute;left:134.50px;top:740px;font-size:16.80px;line-height:19px;color:#a94442;white-space:nowrap;">--</div>
<div style="position:absolute;left:335.90px;top:740px;font-size:16.80px;line-height:19px;color:#333;white-space:nowrap;">DE33_DP</div>
<div style="position:absolute;left:537.50px;top:740px;font-size:16.80px;line-height:19px;color:#333;white-space:nowrap;">AN00F1374E8A40A</div>
<div style="position:absolute;left:739.30px;top:740px;font-size:16.80px;line-height:19px;color:#a94442;white-space:nowrap;">--</div>
<div style="position:absolute;left:940.70px;top:740px;font-size:16.80px;line-height:19px;color:#333;white-space:nowrap;">DE33_LOC</div>
<div style="position:absolute;left:1142.30px;top:740px;font-size:16.80px;line-height:19px;color:#333;white-space:nowrap;">Analog Phone</div>
<div style="position:absolute;left:1344.10px;top:740px;font-size:16.80px;line-height:19px;color:#a94442;white-space:nowrap;">--</div>
<div style="position:absolute;left:1545.50px;top:740px;font-size:16.80px;line-height:19px;color:#333;white-space:nowrap;">SCCP</div>
<div style="position:absolute;left:1747.30px;top:740px;font-size:16.80px;line-height:19px;color:#a94442;white-space:nowrap;">--</div>
<div style="position:absolute;left:134.50px;top:777px;font-size:16.80px;line-height:19px;color:#a94442;white-space:nowrap;">--</div>
<div style="position:absolute;left:335.90px;top:777px;font-size:16.80px;line-height:19px;color:#333;white-space:nowrap;">DE33_DP</div>
<div style="position:absolute;left:537.50px;top:777px;font-size:16.80px;line-height:19px;color:#333;white-space:nowrap;">AN00F1374E8A40B</div>
<div style="position:absolute;left:739.30px;top:777px;font-size:16.80px;line-height:19px;color:#a94442;white-space:nowrap;">--</div>
<div style="position:absolute;left:940.70px;top:777px;font-size:16.80px;line-height:19px;color:#333;white-space:nowrap;">DE33_LOC</div>
<div style="position:absolute;left:1142.30px;top:777px;font-size:16.80px;line-height:19px;color:#333;white-space:nowrap;">Analog Phone</div>
<div style="position:absolute;left:1344.10px;top:777px;font-size:16.80px;line-height:19px;color:#a94442;white-space:nowrap;">--</div>
<div style="position:absolute;left:1545.50px;top:777px;font-size:16.80px;line-height:19px;color:#333;white-space:nowrap;">SCCP</div>
<div style="position:absolute;left:1747.30px;top:777px;font-size:16.80px;line-height:19px;color:#a94442;white-space:nowrap;">--</div>
<div style="position:absolute;left:739.00px;top:439.00px;width:187.00px;height:26.00px;box-sizing:border-box;background:#ededed;border:1px solid #2b542c;border-radius:4px;box-shadow:inset 0 1px 1px rgba(0,0,0,.075),0 0 6px #67b168;"></div>
<div style="position:absolute;left:740.60px;top:443px;font-size:16.80px;line-height:19px;color:#444;white-space:nowrap;">null</div>
<div style="position:absolute;left:18.00px;top:378.00px;width:98.00px;height:53.00px;box-sizing:border-box;background:#dff0d8;"></div>
<div style="position:absolute;left:18.00px;top:433.00px;width:98.00px;height:38.00px;box-sizing:border-box;background:#dff0d8;"></div>
<div style="position:absolute;left:18.00px;top:472.00px;width:98.00px;height:36.00px;box-sizing:border-box;background:#dff0d8;"></div>
<div style="position:absolute;left:18.00px;top:509.00px;width:98.00px;height:36.00px;box-sizing:border-box;background:#dff0d8;"></div>
<div style="position:absolute;left:18.00px;top:546.00px;width:98.00px;height:36.00px;box-sizing:border-box;background:#dff0d8;"></div>
<div style="position:absolute;left:18.00px;top:583.00px;width:98.00px;height:36.00px;box-sizing:border-box;background:#dff0d8;"></div>
<div style="position:absolute;left:18.00px;top:620.00px;width:98.00px;height:36.00px;box-sizing:border-box;background:#dff0d8;"></div>
<div style="position:absolute;left:18.00px;top:657.00px;width:98.00px;height:36.00px;box-sizing:border-box;background:#dff0d8;"></div>
<div style="position:absolute;left:18.00px;top:694.00px;width:98.00px;height:36.00px;box-sizing:border-box;background:#dff0d8;"></div>
<div style="position:absolute;left:18.00px;top:731.00px;width:98.00px;height:36.00px;box-sizing:border-box;background:#dff0d8;"></div>
<div style="position:absolute;left:18.00px;top:768.00px;width:98.00px;height:36.00px;box-sizing:border-box;background:#dff0d8;"></div>
<div style="position:absolute;left:-67.30px;top:811.00px;width:189.30px;height:41.00px;box-sizing:border-box;background:#fff;border:1px solid #ccc;border-radius:5px;"></div>
<div style="position:absolute;left:77.70px;top:811.00px;width:1.00px;height:41.00px;box-sizing:border-box;background:#ccc;"></div>
<div style="position:absolute;left:134.30px;top:811.00px;width:189.30px;height:41.00px;box-sizing:border-box;background:#fff;border:1px solid #ccc;border-radius:5px;"></div>
<div style="position:absolute;left:279.30px;top:811.00px;width:1.00px;height:41.00px;box-sizing:border-box;background:#ccc;"></div>
<div style="position:absolute;left:335.90px;top:811.00px;width:189.30px;height:41.00px;box-sizing:border-box;background:#fff;border:1px solid #ccc;border-radius:5px;"></div>
<div style="position:absolute;left:480.90px;top:811.00px;width:1.00px;height:41.00px;box-sizing:border-box;background:#ccc;"></div>
<div style="position:absolute;left:537.50px;top:811.00px;width:189.30px;height:41.00px;box-sizing:border-box;background:#fff;border:1px solid #ccc;border-radius:5px;"></div>
<div style="position:absolute;left:682.50px;top:811.00px;width:1.00px;height:41.00px;box-sizing:border-box;background:#ccc;"></div>
<div style="position:absolute;left:739.10px;top:811.00px;width:189.30px;height:41.00px;box-sizing:border-box;background:#fff;border:1px solid #ccc;border-radius:5px;"></div>
<div style="position:absolute;left:884.10px;top:811.00px;width:1.00px;height:41.00px;box-sizing:border-box;background:#ccc;"></div>
<div style="position:absolute;left:940.70px;top:811.00px;width:189.30px;height:41.00px;box-sizing:border-box;background:#fff;border:1px solid #ccc;border-radius:5px;"></div>
<div style="position:absolute;left:1085.70px;top:811.00px;width:1.00px;height:41.00px;box-sizing:border-box;background:#ccc;"></div>
<div style="position:absolute;left:1142.30px;top:811.00px;width:189.30px;height:41.00px;box-sizing:border-box;background:#fff;border:1px solid #ccc;border-radius:5px;"></div>
<div style="position:absolute;left:1287.30px;top:811.00px;width:1.00px;height:41.00px;box-sizing:border-box;background:#ccc;"></div>
<div style="position:absolute;left:1343.90px;top:811.00px;width:189.30px;height:41.00px;box-sizing:border-box;background:#fff;border:1px solid #ccc;border-radius:5px;"></div>
<div style="position:absolute;left:1488.90px;top:811.00px;width:1.00px;height:41.00px;box-sizing:border-box;background:#ccc;"></div>
<div style="position:absolute;left:1545.50px;top:811.00px;width:189.30px;height:41.00px;box-sizing:border-box;background:#fff;border:1px solid #ccc;border-radius:5px;"></div>
<div style="position:absolute;left:1690.50px;top:811.00px;width:1.00px;height:41.00px;box-sizing:border-box;background:#ccc;"></div>
<div style="position:absolute;left:1747.10px;top:811.00px;width:189.30px;height:41.00px;box-sizing:border-box;background:#fff;border:1px solid #ccc;border-radius:5px;"></div>
<div style="position:absolute;left:1892.10px;top:811.00px;width:1.00px;height:41.00px;box-sizing:border-box;background:#ccc;"></div>
<svg style="position:absolute;left:0;top:0" width="1919" height="915" viewBox="0 0 1919 915"><path d="M114.30,356.8 L119.30,350.9 L124.30,356.8 Z M114.30,359 L119.30,364.8 L124.30,359 Z" fill="#333"/><path d="M315.90,356.8 L320.90,350.9 L325.90,356.8 Z M315.90,359 L320.90,364.8 L325.90,359 Z" fill="#333"/><path d="M517.50,356.8 L522.50,350.9 L527.50,356.8 Z M517.50,359 L522.50,364.8 L527.50,359 Z" fill="#333"/><path d="M719.10,356.8 L724.10,350.9 L729.10,356.8 Z M719.10,359 L724.10,364.8 L729.10,359 Z" fill="#333"/><path d="M920.70,356.8 L925.70,350.9 L930.70,356.8 Z M920.70,359 L925.70,364.8 L930.70,359 Z" fill="#333"/><path d="M1122.30,356.8 L1127.30,350.9 L1132.30,356.8 Z M1122.30,359 L1127.30,364.8 L1132.30,359 Z" fill="#333"/><path d="M1323.90,356.8 L1328.90,350.9 L1333.90,356.8 Z M1323.90,359 L1328.90,364.8 L1333.90,359 Z" fill="#333"/><path d="M1525.50,356.8 L1530.50,350.9 L1535.50,356.8 Z M1525.50,359 L1530.50,364.8 L1535.50,359 Z" fill="#333"/><path d="M1727.10,356.8 L1732.10,350.9 L1737.10,356.8 Z M1727.10,359 L1732.10,364.8 L1737.10,359 Z" fill="#333"/><path d="M1928.70,356.8 L1933.70,350.9 L1938.70,356.8 Z M1928.70,359 L1933.70,364.8 L1938.70,359 Z" fill="#333"/><path d="M-52.50,399 H-37.80 L-42.60,404 V412 L-47.50,409.4 V404 Z" fill="#444"/><path d="M149.10,399 H163.80 L159.00,404 V412 L154.10,409.4 V404 Z" fill="#444"/><path d="M350.70,399 H365.40 L360.60,404 V412 L355.70,409.4 V404 Z" fill="#444"/><path d="M552.30,399 H567.00 L562.20,404 V412 L557.30,409.4 V404 Z" fill="#444"/><path d="M753.90,399 H768.60 L763.80,404 V412 L758.90,409.4 V404 Z" fill="#444"/><path d="M955.50,399 H970.20 L965.40,404 V412 L960.50,409.4 V404 Z" fill="#444"/><path d="M1157.10,399 H1171.80 L1167.00,404 V412 L1162.10,409.4 V404 Z" fill="#444"/><path d="M1358.70,399 H1373.40 L1368.60,404 V412 L1363.70,409.4 V404 Z" fill="#444"/><path d="M1560.30,399 H1575.00 L1570.20,404 V412 L1565.30,409.4 V404 Z" fill="#444"/><path d="M1761.90,399 H1776.60 L1771.80,404 V412 L1766.90,409.4 V404 Z" fill="#444"/><path d="M28.00,398.90 H41.70 V400.30 H28.00 Z" fill="#333"/><path d="M32.55,399.00 V397.55 H37.25 V399.00" fill="none" stroke="#333" stroke-width="1.1"/><path d="M29.05,400.30 H40.25 V410.90 H29.05 Z" fill="#333"/><path d="M32.50,402.00 V409.10 M34.75,402.00 V409.10 M37.00,402.00 V409.10" stroke="#c5d5bc" stroke-width="1.20"/><path d="M47.9,404.4 C51,400.2 54.5,399.4 56.4,399.4 C58.3,399.4 61.8,400.2 64.9,404.4 C61.8,408.6 58.3,409.5 56.4,409.5 C54.5,409.5 51,408.6 47.9,404.4 Z" fill="none" stroke="#333" stroke-width="1.3"/><path d="M53.8,400.6 Q51,404.6 53.5,409" fill="none" stroke="#333" stroke-width="1.7"/><path d="M59.9,398.2 L53.2,410.6" stroke="#dff0d8" stroke-width="3.6"/><path d="M59.9,398.2 L53.2,410.6" stroke="#333" stroke-width="2.1"/><path d="M60.4,403.2 L57,409.7" stroke="#333" stroke-width="0.9" opacity="0.8"/><path d="M27.90,451.00 H41.90 M34.90,444.20 V457.00" stroke="#333" stroke-width="3.9"/><path d="M49,457.80 L49,454.20 L60.3,443.80 Q61,443.30 61.6,443.90 L64,446.30 Q64.5,447.00 64,447.60 L53.6,457.80 Z" fill="#777"/><path d="M57.9,446.40 L61.3,449.80" stroke="#dff0d8" stroke-width="0.8" opacity="0.7"/><path d="M50.3,454.40 L53.1,457.20" stroke="#fff" stroke-width="1" opacity="0.6"/><path d="M72.6,454.60 H71.5 Q70.1,454.60 70.1,453.20 V443.90 Q70.1,442.50 71.5,442.50 H81 Q82.3,442.50 82.5,443.80" fill="none" stroke="#333" stroke-width="1.3"/><rect x="73.95" y="446.95" width="12.3" height="11.5" rx="0.8" fill="none" stroke="#333" stroke-width="1.3"/><path d="M93.00,446.00 H106.70 V447.40 H93.00 Z" fill="#333"/><path d="M97.55,446.10 V444.65 H102.25 V446.10" fill="none" stroke="#333" stroke-width="1.1"/><path d="M94.05,447.40 H105.25 V458.00 H94.05 Z" fill="#333"/><path d="M97.50,449.10 V456.20 M99.75,449.10 V456.20 M102.00,449.10 V456.20" stroke="#c5d5bc" stroke-width="1.20"/><path d="M27.90,490.00 H41.90 M34.90,483.20 V496.00" stroke="#333" stroke-width="3.9"/><path d="M49,496.80 L49,493.20 L60.3,482.80 Q61,482.30 61.6,482.90 L64,485.30 Q64.5,486.00 64,486.60 L53.6,496.80 Z" fill="#777"/><path d="M57.9,485.40 L61.3,488.80" stroke="#dff0d8" stroke-width="0.8" opacity="0.7"/><path d="M50.3,493.40 L53.1,496.20" stroke="#fff" stroke-width="1" opacity="0.6"/><path d="M72.6,493.60 H71.5 Q70.1,493.60 70.1,492.20 V482.90 Q70.1,481.50 71.5,481.50 H81 Q82.3,481.50 82.5,482.80" fill="none" stroke="#333" stroke-width="1.3"/><rect x="73.95" y="485.95" width="12.3" height="11.5" rx="0.8" fill="none" stroke="#333" stroke-width="1.3"/><path d="M93.00,485.00 H106.70 V486.40 H93.00 Z" fill="#333"/><path d="M97.55,485.10 V483.65 H102.25 V485.10" fill="none" stroke="#333" stroke-width="1.1"/><path d="M94.05,486.40 H105.25 V497.00 H94.05 Z" fill="#333"/><path d="M97.50,488.10 V495.20 M99.75,488.10 V495.20 M102.00,488.10 V495.20" stroke="#c5d5bc" stroke-width="1.20"/><path d="M27.90,527.00 H41.90 M34.90,520.20 V533.00" stroke="#333" stroke-width="3.9"/><path d="M49,533.80 L49,530.20 L60.3,519.80 Q61,519.30 61.6,519.90 L64,522.30 Q64.5,523.00 64,523.60 L53.6,533.80 Z" fill="#777"/><path d="M57.9,522.40 L61.3,525.80" stroke="#dff0d8" stroke-width="0.8" opacity="0.7"/><path d="M50.3,530.40 L53.1,533.20" stroke="#fff" stroke-width="1" opacity="0.6"/><path d="M72.6,530.60 H71.5 Q70.1,530.60 70.1,529.20 V519.90 Q70.1,518.50 71.5,518.50 H81 Q82.3,518.50 82.5,519.80" fill="none" stroke="#333" stroke-width="1.3"/><rect x="73.95" y="522.95" width="12.3" height="11.5" rx="0.8" fill="none" stroke="#333" stroke-width="1.3"/><path d="M93.00,522.00 H106.70 V523.40 H93.00 Z" fill="#333"/><path d="M97.55,522.10 V520.65 H102.25 V522.10" fill="none" stroke="#333" stroke-width="1.1"/><path d="M94.05,523.40 H105.25 V534.00 H94.05 Z" fill="#333"/><path d="M97.50,525.10 V532.20 M99.75,525.10 V532.20 M102.00,525.10 V532.20" stroke="#c5d5bc" stroke-width="1.20"/><path d="M27.90,564.00 H41.90 M34.90,557.20 V570.00" stroke="#333" stroke-width="3.9"/><path d="M49,570.80 L49,567.20 L60.3,556.80 Q61,556.30 61.6,556.90 L64,559.30 Q64.5,560.00 64,560.60 L53.6,570.80 Z" fill="#777"/><path d="M57.9,559.40 L61.3,562.80" stroke="#dff0d8" stroke-width="0.8" opacity="0.7"/><path d="M50.3,567.40 L53.1,570.20" stroke="#fff" stroke-width="1" opacity="0.6"/><path d="M72.6,567.60 H71.5 Q70.1,567.60 70.1,566.20 V556.90 Q70.1,555.50 71.5,555.50 H81 Q82.3,555.50 82.5,556.80" fill="none" stroke="#333" stroke-width="1.3"/><rect x="73.95" y="559.95" width="12.3" height="11.5" rx="0.8" fill="none" stroke="#333" stroke-width="1.3"/><path d="M93.00,559.00 H106.70 V560.40 H93.00 Z" fill="#333"/><path d="M97.55,559.10 V557.65 H102.25 V559.10" fill="none" stroke="#333" stroke-width="1.1"/><path d="M94.05,560.40 H105.25 V571.00 H94.05 Z" fill="#333"/><path d="M97.50,562.10 V569.20 M99.75,562.10 V569.20 M102.00,562.10 V569.20" stroke="#c5d5bc" stroke-width="1.20"/><path d="M27.90,601.00 H41.90 M34.90,594.20 V607.00" stroke="#333" stroke-width="3.9"/><path d="M49,607.80 L49,604.20 L60.3,593.80 Q61,593.30 61.6,593.90 L64,596.30 Q64.5,597.00 64,597.60 L53.6,607.80 Z" fill="#777"/><path d="M57.9,596.40 L61.3,599.80" stroke="#dff0d8" stroke-width="0.8" opacity="0.7"/><path d="M50.3,604.40 L53.1,607.20" stroke="#fff" stroke-width="1" opacity="0.6"/><path d="M72.6,604.60 H71.5 Q70.1,604.60 70.1,603.20 V593.90 Q70.1,592.50 71.5,592.50 H81 Q82.3,592.50 82.5,593.80" fill="none" stroke="#333" stroke-width="1.3"/><rect x="73.95" y="596.95" width="12.3" height="11.5" rx="0.8" fill="none" stroke="#333" stroke-width="1.3"/><path d="M93.00,596.00 H106.70 V597.40 H93.00 Z" fill="#333"/><path d="M97.55,596.10 V594.65 H102.25 V596.10" fill="none" stroke="#333" stroke-width="1.1"/><path d="M94.05,597.40 H105.25 V608.00 H94.05 Z" fill="#333"/><path d="M97.50,599.10 V606.20 M99.75,599.10 V606.20 M102.00,599.10 V606.20" stroke="#c5d5bc" stroke-width="1.20"/><path d="M27.90,638.00 H41.90 M34.90,631.20 V644.00" stroke="#333" stroke-width="3.9"/><path d="M49,644.80 L49,641.20 L60.3,630.80 Q61,630.30 61.6,630.90 L64,633.30 Q64.5,634.00 64,634.60 L53.6,644.80 Z" fill="#777"/><path d="M57.9,633.40 L61.3,636.80" stroke="#dff0d8" stroke-width="0.8" opacity="0.7"/><path d="M50.3,641.40 L53.1,644.20" stroke="#fff" stroke-width="1" opacity="0.6"/><path d="M72.6,641.60 H71.5 Q70.1,641.60 70.1,640.20 V630.90 Q70.1,629.50 71.5,629.50 H81 Q82.3,629.50 82.5,630.80" fill="none" stroke="#333" stroke-width="1.3"/><rect x="73.95" y="633.95" width="12.3" height="11.5" rx="0.8" fill="none" stroke="#333" stroke-width="1.3"/><path d="M93.00,633.00 H106.70 V634.40 H93.00 Z" fill="#333"/><path d="M97.55,633.10 V631.65 H102.25 V633.10" fill="none" stroke="#333" stroke-width="1.1"/><path d="M94.05,634.40 H105.25 V645.00 H94.05 Z" fill="#333"/><path d="M97.50,636.10 V643.20 M99.75,636.10 V643.20 M102.00,636.10 V643.20" stroke="#c5d5bc" stroke-width="1.20"/><path d="M27.90,675.00 H41.90 M34.90,668.20 V681.00" stroke="#333" stroke-width="3.9"/><path d="M49,681.80 L49,678.20 L60.3,667.80 Q61,667.30 61.6,667.90 L64,670.30 Q64.5,671.00 64,671.60 L53.6,681.80 Z" fill="#777"/><path d="M57.9,670.40 L61.3,673.80" stroke="#dff0d8" stroke-width="0.8" opacity="0.7"/><path d="M50.3,678.40 L53.1,681.20" stroke="#fff" stroke-width="1" opacity="0.6"/><path d="M72.6,678.60 H71.5 Q70.1,678.60 70.1,677.20 V667.90 Q70.1,666.50 71.5,666.50 H81 Q82.3,666.50 82.5,667.80" fill="none" stroke="#333" stroke-width="1.3"/><rect x="73.95" y="670.95" width="12.3" height="11.5" rx="0.8" fill="none" stroke="#333" stroke-width="1.3"/><path d="M93.00,670.00 H106.70 V671.40 H93.00 Z" fill="#333"/><path d="M97.55,670.10 V668.65 H102.25 V670.10" fill="none" stroke="#333" stroke-width="1.1"/><path d="M94.05,671.40 H105.25 V682.00 H94.05 Z" fill="#333"/><path d="M97.50,673.10 V680.20 M99.75,673.10 V680.20 M102.00,673.10 V680.20" stroke="#c5d5bc" stroke-width="1.20"/><path d="M27.90,712.00 H41.90 M34.90,705.20 V718.00" stroke="#333" stroke-width="3.9"/><path d="M49,718.80 L49,715.20 L60.3,704.80 Q61,704.30 61.6,704.90 L64,707.30 Q64.5,708.00 64,708.60 L53.6,718.80 Z" fill="#777"/><path d="M57.9,707.40 L61.3,710.80" stroke="#dff0d8" stroke-width="0.8" opacity="0.7"/><path d="M50.3,715.40 L53.1,718.20" stroke="#fff" stroke-width="1" opacity="0.6"/><path d="M72.6,715.60 H71.5 Q70.1,715.60 70.1,714.20 V704.90 Q70.1,703.50 71.5,703.50 H81 Q82.3,703.50 82.5,704.80" fill="none" stroke="#333" stroke-width="1.3"/><rect x="73.95" y="707.95" width="12.3" height="11.5" rx="0.8" fill="none" stroke="#333" stroke-width="1.3"/><path d="M93.00,707.00 H106.70 V708.40 H93.00 Z" fill="#333"/><path d="M97.55,707.10 V705.65 H102.25 V707.10" fill="none" stroke="#333" stroke-width="1.1"/><path d="M94.05,708.40 H105.25 V719.00 H94.05 Z" fill="#333"/><path d="M97.50,710.10 V717.20 M99.75,710.10 V717.20 M102.00,710.10 V717.20" stroke="#c5d5bc" stroke-width="1.20"/><path d="M27.90,749.00 H41.90 M34.90,742.20 V755.00" stroke="#333" stroke-width="3.9"/><path d="M49,755.80 L49,752.20 L60.3,741.80 Q61,741.30 61.6,741.90 L64,744.30 Q64.5,745.00 64,745.60 L53.6,755.80 Z" fill="#777"/><path d="M57.9,744.40 L61.3,747.80" stroke="#dff0d8" stroke-width="0.8" opacity="0.7"/><path d="M50.3,752.40 L53.1,755.20" stroke="#fff" stroke-width="1" opacity="0.6"/><path d="M72.6,752.60 H71.5 Q70.1,752.60 70.1,751.20 V741.90 Q70.1,740.50 71.5,740.50 H81 Q82.3,740.50 82.5,741.80" fill="none" stroke="#333" stroke-width="1.3"/><rect x="73.95" y="744.95" width="12.3" height="11.5" rx="0.8" fill="none" stroke="#333" stroke-width="1.3"/><path d="M93.00,744.00 H106.70 V745.40 H93.00 Z" fill="#333"/><path d="M97.55,744.10 V742.65 H102.25 V744.10" fill="none" stroke="#333" stroke-width="1.1"/><path d="M94.05,745.40 H105.25 V756.00 H94.05 Z" fill="#333"/><path d="M97.50,747.10 V754.20 M99.75,747.10 V754.20 M102.00,747.10 V754.20" stroke="#c5d5bc" stroke-width="1.20"/><path d="M27.90,786.00 H41.90 M34.90,779.20 V792.00" stroke="#333" stroke-width="3.9"/><path d="M49,792.80 L49,789.20 L60.3,778.80 Q61,778.30 61.6,778.90 L64,781.30 Q64.5,782.00 64,782.60 L53.6,792.80 Z" fill="#777"/><path d="M57.9,781.40 L61.3,784.80" stroke="#dff0d8" stroke-width="0.8" opacity="0.7"/><path d="M50.3,789.40 L53.1,792.20" stroke="#fff" stroke-width="1" opacity="0.6"/><path d="M72.6,789.60 H71.5 Q70.1,789.60 70.1,788.20 V778.90 Q70.1,777.50 71.5,777.50 H81 Q82.3,777.50 82.5,778.80" fill="none" stroke="#333" stroke-width="1.3"/><rect x="73.95" y="781.95" width="12.3" height="11.5" rx="0.8" fill="none" stroke="#333" stroke-width="1.3"/><path d="M93.00,781.00 H106.70 V782.40 H93.00 Z" fill="#333"/><path d="M97.55,781.10 V779.65 H102.25 V781.10" fill="none" stroke="#333" stroke-width="1.1"/><path d="M94.05,782.40 H105.25 V793.00 H94.05 Z" fill="#333"/><path d="M97.50,784.10 V791.20 M99.75,784.10 V791.20 M102.00,784.10 V791.20" stroke="#c5d5bc" stroke-width="1.20"/><path d="M91.60,825.9 H107.60 M91.60,831 H107.60 M91.60,836.1 H107.60" stroke="#111" stroke-width="1.9"/><path d="M293.20,825.9 H309.20 M293.20,831 H309.20 M293.20,836.1 H309.20" stroke="#111" stroke-width="1.9"/><path d="M494.80,825.9 H510.80 M494.80,831 H510.80 M494.80,836.1 H510.80" stroke="#111" stroke-width="1.9"/><path d="M696.40,825.9 H712.40 M696.40,831 H712.40 M696.40,836.1 H712.40" stroke="#111" stroke-width="1.9"/><path d="M898.00,825.9 H914.00 M898.00,831 H914.00 M898.00,836.1 H914.00" stroke="#111" stroke-width="1.9"/><path d="M1099.60,825.9 H1115.60 M1099.60,831 H1115.60 M1099.60,836.1 H1115.60" stroke="#111" stroke-width="1.9"/><path d="M1301.20,825.9 H1317.20 M1301.20,831 H1317.20 M1301.20,836.1 H1317.20" stroke="#111" stroke-width="1.9"/><path d="M1502.80,825.9 H1518.80 M1502.80,831 H1518.80 M1502.80,836.1 H1518.80" stroke="#111" stroke-width="1.9"/><path d="M1704.40,825.9 H1720.40 M1704.40,831 H1720.40 M1704.40,836.1 H1720.40" stroke="#111" stroke-width="1.9"/><path d="M1906.00,825.9 H1922.00 M1906.00,831 H1922.00 M1906.00,836.1 H1922.00" stroke="#111" stroke-width="1.9"/></svg>
</div></div>
<div style="position:absolute;left:18.00px;top:883.00px;width:1867.00px;height:15.50px;box-sizing:border-box;background:#e9e9e9;"></div>
<div style="position:absolute;left:18.00px;top:883.00px;width:17.00px;height:15.50px;box-sizing:border-box;background:#efefef;"></div>
<div style="position:absolute;left:166.40px;top:883.30px;width:134.30px;height:14.30px;box-sizing:border-box;background:linear-gradient(#f9f9f9,#ececec 45%,#dadada 55%,#d0d0d0);border:1px solid #8f8f8f;border-radius:2px;"></div>
<svg style="position:absolute;left:0;top:0" width="1919" height="915" viewBox="0 0 1919 915"><path d="M24.2,890.5 L27.8,887 V894 Z" fill="#505050"/><path d="M1878.8,890.5 L1875.2,887 V894 Z" fill="#505050"/><path d="M229.6,887 V894 M231.6,887 V894 M233.6,887 V894" stroke="#444" stroke-width="1"/></svg>
<div style="position:absolute;left:664.30px;top:359.10px;width:339.40px;height:60.30px;box-sizing:border-box;background:#fff;border:1px solid rgba(0,0,0,.2);border-radius:6px;box-shadow:0 5px 10px rgba(0,0,0,.2);"></div>
<svg style="position:absolute;left:0;top:0" width="1919" height="915" viewBox="0 0 1919 915"><path d="M821.2,419 L833.8,431.6 L846.4,419" fill="#fff" stroke="rgba(0,0,0,.25)" stroke-width="1"/><rect x="822" y="417.5" width="24" height="2" fill="#fff"/></svg>
<div style="position:absolute;left:683.00px;top:372.00px;width:133.00px;height:35.00px;box-sizing:border-box;background:#fff;border:1px solid #ccc;border-radius:4px;"></div>
<div style="position:absolute;left:729.00px;top:372.00px;width:1.00px;height:35.00px;box-sizing:border-box;background:#ccc;"></div>
<div style="position:absolute;left:775.00px;top:372.00px;width:1.00px;height:35.00px;box-sizing:border-box;background:#ccc;"></div>
<div style="position:absolute;left:822.00px;top:372.00px;width:120.00px;height:35.00px;box-sizing:border-box;background:#fff;border:1px solid #ccc;border-radius:4px;"></div>
<div style="position:absolute;left:863.00px;top:372.00px;width:1.00px;height:35.00px;box-sizing:border-box;background:#ccc;"></div>
<div style="position:absolute;left:905.00px;top:372.00px;width:37.00px;height:35.00px;box-sizing:border-box;background:#5cb85c;border:1px solid #4cae4c;border-radius:0 4px 4px 0;"></div>
<div style="position:absolute;left:948.00px;top:372.00px;width:37.00px;height:35.00px;box-sizing:border-box;background:#d9534f;border:1px solid #d43f3a;border-radius:4px;"></div>
<div style="position:absolute;left:696.30px;top:381px;font-size:14.40px;line-height:16px;color:#333;white-space:nowrap;font-style:italic;">A-z</div>
<div style="position:absolute;left:742.30px;top:381px;font-size:14.40px;line-height:16px;color:#333;white-space:nowrap;font-style:italic;">0-9</div>
<svg style="position:absolute;left:0;top:0" width="1919" height="915" viewBox="0 0 1919 915"><path d="M792,385.8 L788.6,390 L792,394.2 M799.4,385.8 L802.8,390 L799.4,394.2" fill="none" stroke="#333" stroke-width="1.3"/><path d="M797.6,384.6 L793.8,395.4" stroke="#333" stroke-width="1.2"/><rect x="835.6" y="384.4" width="15.2" height="9.4" rx="4.7" fill="#333" stroke="#333" stroke-width="1"/><circle cx="846.1" cy="389.1" r="3.7" fill="#fff"/><rect x="876.9" y="384.4" width="15" height="9.4" rx="4.7" fill="none" stroke="#333" stroke-width="1.2"/><circle cx="881.6" cy="389.1" r="4.7" fill="none" stroke="#333" stroke-width="1.2"/><ellipse cx="923.5" cy="389" rx="4.5" ry="4.45" fill="none" stroke="#fff" stroke-width="1.4"/><path d="M918.9,394 L928.6,384" stroke="#fff" stroke-width="1.1"/><path d="M960.10,384.63 H971.88 V385.84 H960.10 Z" fill="#fff"/><path d="M964.01,384.72 V383.47 H968.06 V384.72" fill="none" stroke="#fff" stroke-width="1"/><path d="M961.00,385.84 H970.63 V394.95 H961.00 Z" fill="#fff"/><path d="M963.97,387.30 V393.41 M965.90,387.30 V393.41 M967.84,387.30 V393.41" stroke="#e9a09e" stroke-width="1.03"/></svg>
<div style="position:absolute;left:652.00px;top:351.00px;width:365.60px;height:79.00px;box-sizing:border-box;border:3px solid #f00;border-radius:2px;"></div>
<div style="position:absolute;left:1903.00px;top:0.00px;width:16.00px;height:915.00px;box-sizing:border-box;background:#fff;"></div>
<div style="position:absolute;left:1904.00px;top:0.00px;width:15.00px;height:915.00px;box-sizing:border-box;background:linear-gradient(90deg,#e3e3e3,#ececec 2px,#f0f0f0 3px);"></div>
<svg style="position:absolute;left:0;top:0" width="1919" height="915" viewBox="0 0 1919 915"><path d="M1912.45,5.9 L1916,9.85 H1908.9 Z" fill="#707070"/></svg>
<!--BODY-->
</body></html>
